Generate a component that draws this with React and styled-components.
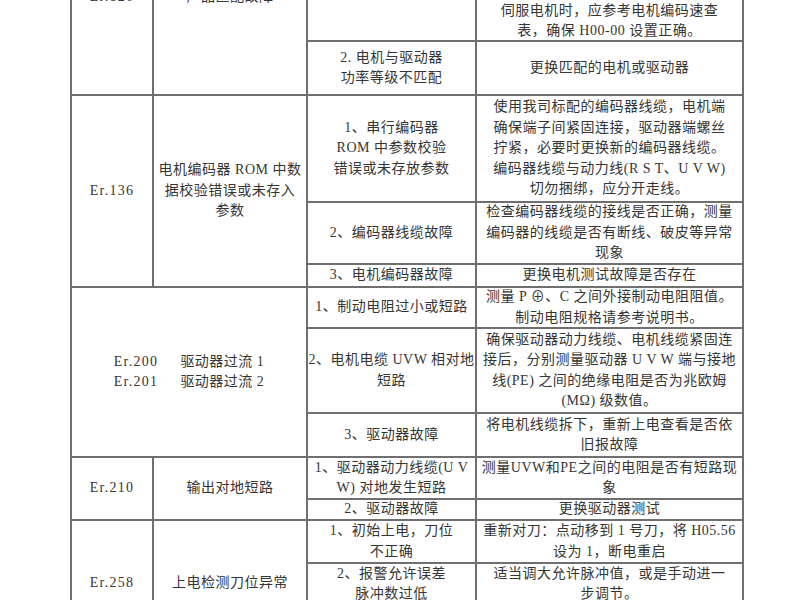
import React from 'react';
import styled, { createGlobalStyle } from 'styled-components';

const GlobalStyle = createGlobalStyle`
  html, body {
    margin: 0;
    padding: 0;
    background: #ffffff;
  }
  body {
    font-family: "Liberation Serif", "Noto Sans CJK SC", sans-serif;
  }
`;

const Page = styled.div`
  width: 800px;
  height: 600px;
  overflow: hidden;
  background: #ffffff;
`;

const Sheet = styled.div`
  display: grid;
  grid-template-columns: 80px 152px 167px 265px;
  grid-template-rows: 140px 52px 105px 60px 21px 39px 83px 42px 40px 19px 41px 40px 39px;
  gap: 2px;
  padding: 2px;
  width: max-content;
  margin: -102px 0 0 70px;
  background: #6f6f6f;
`;

const Cell = styled.div`
  grid-row: span ${({ $rows }) => $rows || 1};
  grid-column: span ${({ $cols }) => $cols || 1};
  display: flex;
  flex-direction: column;
  align-items: center;
  justify-content: center;
  min-height: 0;
  background: #ffffff;
  color: #353535;
  font-size: 14px;
  line-height: 20.5px;
  letter-spacing: 0.5px;
  text-align: center;
`;

const Line = styled.div`
  white-space: nowrap;
`;

const Code = styled.span`
  letter-spacing: 1.3px;
`;

const PairLine = styled.div`
  display: flex;
  gap: 22px;
  white-space: nowrap;
`;

const errors = [
  {
    code: 'Er.120',
    name: ['产品匹配故障'],
    items: [
      {
        cause: ['1. 产品（编码器或', '驱动器）参数', '不存在'],
        fix: [
          '查看产品型号铭牌，确认驱动器与',
          '电机型号是否匹配；使用我司增量',
          '式编码器电机时，确认编码器线缆',
          '连接正确后重新上电；使用非我司',
          '电机时，应正确设置电机参数；',
          '伺服电机时，应参考电机编码速查',
          '表，确保 H00-00  设置正确。',
        ],
      },
      { cause: ['2.  电机与驱动器', '功率等级不匹配'], fix: ['更换匹配的电机或驱动器'] },
    ],
  },
  {
    code: 'Er.136',
    name: ['电机编码器 ROM  中数', '据校验错误或未存入', '参数'],
    items: [
      {
        cause: ['1、串行编码器', 'ROM  中参数校验', '错误或未存放参数'],
        fix: [
          '使用我司标配的编码器线缆，电机端',
          '确保端子间紧固连接，驱动器端螺丝',
          '拧紧，必要时更换新的编码器线缆。',
          '编码器线缆与动力线(R S T、U V W)',
          '切勿捆绑，应分开走线。',
        ],
      },
      {
        cause: ['2、编码器线缆故障'],
        fix: ['检查编码器线缆的接线是否正确，测量', '编码器的线缆是否有断线、破皮等异常', '现象'],
      },
      { cause: ['3、电机编码器故障'], fix: ['更换电机测试故障是否存在'] },
    ],
  },
  {
    pairs: [
      ['Er.200', '驱动器过流 1'],
      ['Er.201', '驱动器过流 2'],
    ],
    items: [
      {
        cause: ['1、制动电阻过小或短路'],
        fix: ['测量 P ⊕、C  之间外接制动电阻阻值。', '制动电阻规格请参考说明书。'],
      },
      {
        cause: ['2、电机电缆 UVW 相对地', '短路'],
        fix: [
          '确保驱动器动力线缆、电机线缆紧固连',
          '接后，分别测量驱动器 U V W  端与接地',
          '线(PE) 之间的绝缘电阻是否为兆欧姆',
          '(MΩ) 级数值。',
        ],
      },
      { cause: ['3、驱动器故障'], fix: ['将电机线缆拆下，重新上电查看是否依', '旧报故障'] },
    ],
  },
  {
    code: 'Er.210',
    name: ['输出对地短路'],
    items: [
      {
        cause: ['1、驱动器动力线缆(U V', 'W) 对地发生短路'],
        fix: ['测量UVW和PE之间的电阻是否有短路现', '象'],
      },
      { cause: ['2、驱动器故障'], fix: ['更换驱动器测试'] },
    ],
  },
  {
    code: 'Er.258',
    name: ['上电检测刀位异常'],
    items: [
      { cause: ['1、初始上电，刀位', '不正确'], fix: ['重新对刀：点动移到 1 号刀，将 H05.56', '设为 1，断电重启'] },
      { cause: ['2、报警允许误差', '脉冲数过低'], fix: ['适当调大允许脉冲值，或是手动进一', '步调节。'] },
      { cause: ['3、刀盘机械卡滞'], fix: ['检查刀盘机械结构是否正常'] },
    ],
  },
];

const Lines = ({ lines }) => lines.map((text, i) => <Line key={i}>{text}</Line>);

export default function App() {
  return (
    <Page lang="zh-CN">
      <GlobalStyle />
      <Sheet>
        {errors.map((err, ei) => (
          <React.Fragment key={ei}>
            {err.pairs ? (
              <Cell $rows={err.items.length} $cols={2}>
                {err.pairs.map(([code, name]) => (
                  <PairLine key={code}>
                    <Code>{code}</Code>
                    <span>{name}</span>
                  </PairLine>
                ))}
              </Cell>
            ) : (
              <>
                <Cell $rows={err.items.length}>
                  <Code>{err.code}</Code>
                </Cell>
                <Cell $rows={err.items.length}>
                  <Lines lines={err.name} />
                </Cell>
              </>
            )}
            {err.items.map((item, ii) => (
              <React.Fragment key={ii}>
                <Cell>
                  <Lines lines={item.cause} />
                </Cell>
                <Cell>
                  <Lines lines={item.fix} />
                </Cell>
              </React.Fragment>
            ))}
          </React.Fragment>
        ))}
      </Sheet>
    </Page>
  );
}
